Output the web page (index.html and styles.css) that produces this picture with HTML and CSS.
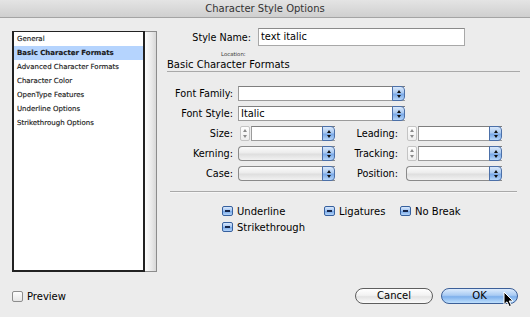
FILE: index.html
```
<!DOCTYPE html>
<html>
<head>
 <title>Character Style Options</title>
 <link rel="stylesheet" href="styles.css">
</head>
<body>
 <div class="window">
 <div class="titlebar">Character Style Options</div>
 <div class="dialog">
 <div class="sidebar">
 <div class="listbox">
 <ul class="list">
 <li>General</li>
 <li class="selected">Basic Character Formats</li>
 <li>Advanced Character Formats</li>
 <li>Character Color</li>
 <li>OpenType Features</li>
 <li>Underline Options</li>
 <li>Strikethrough Options</li>
 </ul>
 <div class="scrolltrack"></div>
 </div>
 </div>
 <div class="panel">
 <div class="name-row">
 <label class="name-label" for="styleName">Style Name:</label>
 <div class="textfield name-field" id="styleName">text italic</div>
 </div>
 <div class="location">Location:</div>
 <div class="section-title">Basic Character Formats</div>

 <div class="fields">
 <div class="row">
 <span class="lbl">Font Family:</span>
 <div class="popup long"><span class="value"></span><span class="arrows"><i class="up"></i><i class="down"></i></span></div>
 </div>
 <div class="row">
 <span class="lbl">Font Style:</span>
 <div class="popup long"><span class="value">Italic</span><span class="arrows"><i class="up"></i><i class="down"></i></span></div>
 </div>
 <div class="row">
 <span class="lbl">Size:</span>
 <div class="spin-group">
 <span class="stepper"><i class="up"></i><i class="down"></i></span>
 <div class="popup"><span class="value"></span><span class="arrows"><i class="up"></i><i class="down"></i></span></div>
 </div>
 <span class="lbl right">Leading:</span>
 <div class="spin-group second">
 <span class="stepper"><i class="up"></i><i class="down"></i></span>
 <div class="popup"><span class="value"></span><span class="arrows"><i class="up"></i><i class="down"></i></span></div>
 </div>
 </div>
 <div class="row">
 <span class="lbl">Kerning:</span>
 <div class="popup combo"><span class="value"></span><span class="arrows"><i class="up"></i><i class="down"></i></span></div>
 <span class="lbl right">Tracking:</span>
 <div class="spin-group second">
 <span class="stepper"><i class="up"></i><i class="down"></i></span>
 <div class="popup"><span class="value"></span><span class="arrows"><i class="up"></i><i class="down"></i></span></div>
 </div>
 </div>
 <div class="row">
 <span class="lbl">Case:</span>
 <div class="popup combo"><span class="value"></span><span class="arrows"><i class="up"></i><i class="down"></i></span></div>
 <span class="lbl right">Position:</span>
 <div class="popup combo second"><span class="value"></span><span class="arrows"><i class="up"></i><i class="down"></i></span></div>
 </div>
 </div>

 <div class="sep"></div>

 <div class="checks">
 <div class="check"><span class="box mixed"></span>Underline</div>
 <div class="check"><span class="box mixed"></span>Ligatures</div>
 <div class="check"><span class="box mixed"></span>No Break</div>
 <div class="check"><span class="box mixed"></span>Strikethrough</div>
 </div>
 </div>
 </div>

 <div class="footer">
 <div class="preview"><span class="box plain"></span>Preview</div>
 <div class="buttons">
 <div class="button">Cancel</div>
 <div class="button default">OK</div>
 </div>
 </div>

 <svg class="cursor" width="12" height="17" viewBox="0 0 12 17">
 <path d="M1 1 L1 13.5 L4 10.8 L6.3 15.6 L8.4 14.6 L6.2 10 L10 10 Z" fill="#000" stroke="#fff" stroke-width="1"/>
 </svg>
 </div>
</body>
</html>
```

FILE: styles.css
```
/* dialog chrome */
body {
margin: 0;
background-color: #ececec;
font-family: "DejaVu Sans", "Noto Sans", sans-serif;
font-size: 10px;
color: #000;
}
.window {
position: relative;
width: 530px;
height: 317px;
overflow: hidden;
background-color: #ececec;
}
.titlebar {
height: 17px;
line-height: 17px;
text-align: center;
font-size: 10px;
color: #333;
background: linear-gradient(#e4e4e4, #cfcfcf);
border-bottom: 1px solid #a4a4a4;
}
.dialog {
display: flex;
height: 264px;
}

/* left list */
.sidebar {
margin-left: 12px;
margin-top: 13px;
}
.listbox {
display: flex;
width: 145px;
height: 241px;
}
.list {
list-style: none;
margin: 0;
padding: 0;
width: 129px;
border: 2px solid #222;
border-top-width: 1px;
background-color: #fff;
font-size: 7px;
}
.list li {
height: 14px;
line-height: 14px;
padding-left: 3px;
color: #1a1a1a;
-webkit-text-stroke: 0.15px #1a1a1a;
}
.list li.selected {
background-color: #b5d4fe;
font-weight: bold;
}
.scrolltrack {
width: 11px;
border: 1px solid #8c8c8c;
border-left: none;
background: linear-gradient(to right, #fdfdfd, #e9e9e9 60%, #d8d8d8);
}

/* right panel */
.panel {
width: 353px;
margin-left: 10px;
padding-top: 10px;
}
.name-row {
display: flex;
align-items: center;
height: 18px;
}
.name-label {
width: 84px;
text-align: right;
margin-right: 7px;
font-size: 9.6px;
}
.textfield {
box-sizing: border-box;
height: 18px;
border: 1px solid #a8a8a8;
border-top-color: #8a8a8a;
background-color: #fff;
padding-left: 2px;
line-height: 16px;
font-size: 9.8px;
}
.name-field {
width: 207px;
}
.location {
margin-top: 3px;
height: 10px;
line-height: 10px;
padding-left: 54px;
font-size: 5.4px;
color: #333;
}
.section-title {
height: 12px;
line-height: 12px;
font-size: 10px;
border-bottom: 1px solid #a9a9a9;
}

/* popups and fields */
.fields {
margin-top: 14px;
display: flex;
flex-direction: column;
gap: 5px;
}
.row {
display: flex;
align-items: center;
height: 15px;
}
.lbl {
width: 66px;
margin-right: 5px;
text-align: right;
font-size: 9.7px;
}
.lbl.right {
width: 63px;
margin-right: 8px;
}
.popup {
display: flex;
box-sizing: border-box;
height: 15px;
width: 97px;
border: 1px solid #9b9b9b;
border-top-color: #7f7f7f;
border-right: none;
background-color: #fff;
}
.popup.long {
width: 167px;
}
.popup.combo {
border-radius: 4px 0 0 4px;
border-color: #8a8a8a;
background: linear-gradient(#fbfbfb, #ececec 45%, #dedede 55%, #f2f2f2);
}
.popup.second {
width: 96px;
}
.popup .value {
flex: 1;
padding-left: 2px;
line-height: 13px;
font-size: 9.8px;
}
.arrows {
display: flex;
flex-direction: column;
align-items: center;
justify-content: center;
gap: 2px;
width: 11px;
margin: -1px 0;
border: 1px solid #4c70a8;
border-radius: 0 4px 4px 0;
background: linear-gradient(#d9e8fb, #a9c9f1 45%, #79a8e6 55%, #b6d6fa);
}
.arrows i,
.stepper i {
display: block;
width: 0;
height: 0;
border-left: 2px solid transparent;
border-right: 2px solid transparent;
}
.arrows i.up {
border-bottom: 3px solid #111;
}
.arrows i.down {
border-top: 3px solid #111;
}
.spin-group {
display: flex;
width: 97px;
padding-left: 2px;
gap: 1px;
box-sizing: border-box;
}
.spin-group.second {
width: 96px;
padding-left: 1px;
}
.spin-group .popup {
flex: 1;
width: auto;
}
.stepper {
display: flex;
flex-direction: column;
align-items: center;
justify-content: space-around;
box-sizing: border-box;
width: 10px;
height: 15px;
border: 1px solid #c4c4c4;
border-radius: 2px;
background: linear-gradient(#fdfdfd, #eeeeee);
padding: 1px 0;
}
.stepper i.up {
border-bottom: 3px solid #8a8a8a;
}
.stepper i.down {
border-top: 3px solid #8a8a8a;
}

/* checkboxes */
.sep {
margin: 10px 3px 0;
height: 1px;
background-color: #a9a9a9;
border-bottom: 1px solid #f6f6f6;
}
.checks {
margin-top: 10px;
padding-left: 55px;
display: grid;
grid-template-columns: 102px 76px auto;
grid-auto-rows: 16px;
}
.check,
.preview {
display: flex;
align-items: center;
font-size: 10px;
}
.box {
position: relative;
box-sizing: border-box;
width: 11px;
height: 10px;
margin-right: 4px;
border-radius: 2px;
}
.box.mixed {
border: 1px solid #36609e;
background: linear-gradient(#d8e8fc, #9ec2f0 50%, #7aa9e6 55%, #b4d5fa);
}
.box.mixed::after {
content: "";
position: absolute;
left: 2px;
top: 3px;
width: 5px;
height: 2px;
background-color: #16264a;
}
.box.plain {
width: 11px;
height: 11px;
margin-right: 4px;
border: 1px solid #8d8d8d;
background: linear-gradient(#fdfdfd, #e6e6e6);
}

/* footer */
.footer {
display: flex;
align-items: center;
justify-content: space-between;
padding: 6px 12px 0;
}
.buttons {
display: flex;
gap: 8px;
}
.button {
box-sizing: border-box;
width: 78px;
height: 16px;
line-height: 14px;
text-align: center;
font-size: 10px;
border: 1px solid #5e5e5e;
border-radius: 8px;
background: linear-gradient(#ffffff, #f2f2f2 45%, #e3e3e3 55%, #fbfbfb);
}
.button.default {
width: 77px;
border-color: #3c5f98;
background: linear-gradient(#dcebfd, #a9cbf3 45%, #7eb0ec 55%, #bfe0fd);
}
.cursor {
position: absolute;
left: 503px;
top: 291px;
}
```
